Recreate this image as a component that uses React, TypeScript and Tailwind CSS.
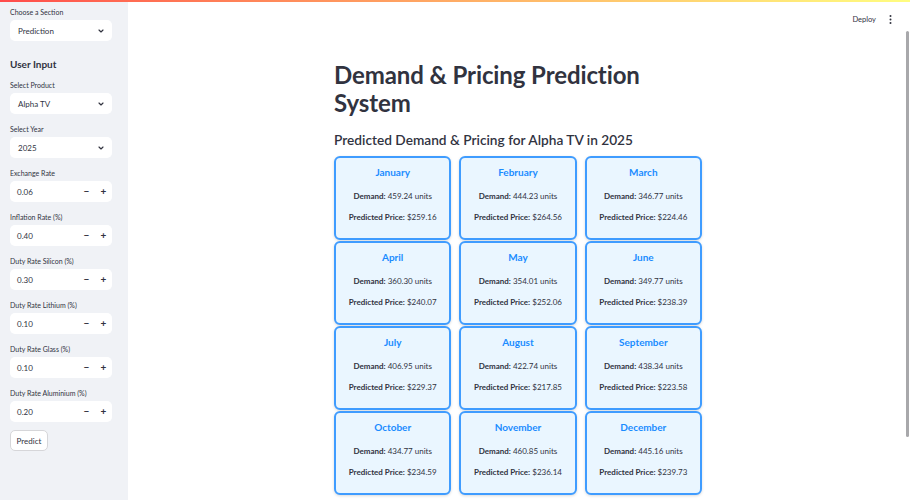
import React from "react";

const months = [
  ["January", "459.24", "259.16"],
  ["February", "444.23", "264.56"],
  ["March", "346.77", "224.46"],
  ["April", "360.30", "240.07"],
  ["May", "354.01", "252.06"],
  ["June", "349.77", "238.39"],
  ["July", "406.95", "229.37"],
  ["August", "422.74", "217.85"],
  ["September", "438.34", "223.58"],
  ["October", "434.77", "234.59"],
  ["November", "460.85", "236.14"],
  ["December", "445.16", "239.73"],
];

function Chevron() {
  return (
    <svg width="8" height="8" viewBox="0 0 24 24" fill="none" stroke="#31333f" strokeWidth="3.5" strokeLinecap="round" strokeLinejoin="round">
      <path d="M6 9l6 6 6-6" />
    </svg>
  );
}

function SelectBox({ label, value }: { label: string; value: string }) {
  return (
    <div className="flex flex-col">
      <div className="text-[7px] leading-[10px] text-[#31333f] mb-[3px]">{label}</div>
      <div className="h-[21px] w-[102px] rounded-[5px] bg-white flex items-center justify-between pl-[8px] pr-[7px] text-[8px] text-[#31333f]">
        <span>{value}</span>
        <Chevron />
      </div>
    </div>
  );
}

function NumberBox({ label, value }: { label: string; value: string }) {
  return (
    <div className="flex flex-col">
      <div className="text-[7px] leading-[10px] text-[#31333f] mb-[3px]">{label}</div>
      <div className="h-[21px] w-[102px] rounded-[5px] bg-white flex items-center pl-[7px] text-[8px] text-[#31333f]">
        <span className="flex-1">{value}</span>
        <span className="w-[17px] text-center font-bold text-[10px]">−</span>
        <span className="w-[17px] text-center font-bold text-[10px]">+</span>
      </div>
    </div>
  );
}

export default function App() {
  return (
    <div
      className="relative h-[500px] w-[910px] overflow-hidden bg-white text-[#31333f]"
      style={{ fontFamily: "Lato, 'Noto Sans', sans-serif" }}
    >
      <div className="absolute left-0 right-0 top-0 h-[2px] z-10 bg-gradient-to-r from-[#ff4b4b] to-[#fffd80]" />
      <div className="flex h-full">
        <aside className="w-[128px] shrink-0 bg-[#f0f2f6] pl-[10px] pt-[7px] flex flex-col">
          <SelectBox label="Choose a Section" value="Prediction" />
          <div className="mt-[16px] text-[10px] font-bold leading-[14px] mb-[9px]">User Input</div>
          <div className="flex flex-col gap-[10px]">
            <SelectBox label="Select Product" value="Alpha TV" />
            <SelectBox label="Select Year" value="2025" />
            <NumberBox label="Exchange Rate" value="0.06" />
            <NumberBox label="Inflation Rate (%)" value="0.40" />
            <NumberBox label="Duty Rate Silicon (%)" value="0.30" />
            <NumberBox label="Duty Rate Lithium (%)" value="0.10" />
            <NumberBox label="Duty Rate Glass (%)" value="0.10" />
            <NumberBox label="Duty Rate Aluminium (%)" value="0.20" />
          </div>
          <div className="mt-[8px] h-[21px] w-[38px] rounded-[5px] border border-[#d6d6d9] bg-white flex items-center justify-center text-[8px]">
            Predict
          </div>
        </aside>
        <main className="relative flex-1 flex justify-center">
          <div className="absolute right-[18px] top-[14px] flex items-center gap-[13px] text-[7.5px]">
            <span>Deploy</span>
            <svg width="3" height="9" viewBox="0 0 3 9" fill="#31333f">
              <circle cx="1.5" cy="1" r="1" />
              <circle cx="1.5" cy="4.5" r="1" />
              <circle cx="1.5" cy="8" r="1" />
            </svg>
          </div>
          <div className="absolute right-[1px] top-[31px] h-[406px] w-[3px] rounded-full bg-[#a8a8ab]" />
          <div className="w-[368px] pt-[61px] mr-[2px]">
            <h1 className="text-[24px] font-bold leading-[28px] tracking-[-0.1px] w-[330px]">
              Demand &amp; Pricing Prediction System
            </h1>
            <h2 className="mt-[14px] text-[13.7px] font-semibold leading-[18px]">
              Predicted Demand &amp; Pricing for Alpha TV in 2025
            </h2>
            <div className="mt-[7px] grid grid-cols-3 gap-x-[8px] gap-y-[1px]">
              {months.map(([m, d, p]) => (
                <div
                  key={m}
                  className="h-[84px] rounded-[6px] border-2 border-[#3f9cff] bg-[#eaf6ff] shadow-[0_1px_3px_rgba(0,0,0,0.15)] flex flex-col items-center pt-[8px]"
                >
                  <div className="text-[10px] font-bold text-[#1a8cff] leading-[13px]">{m}</div>
                  <div className="mt-[12px] text-[8px] leading-[11px]">
                    <span className="font-bold">Demand:</span> {d} units
                  </div>
                  <div className="mt-[10px] text-[8px] leading-[11px]">
                    <span className="font-bold">Predicted Price:</span> ${p}
                  </div>
                </div>
              ))}
            </div>
          </div>
        </main>
      </div>
    </div>
  );
}
